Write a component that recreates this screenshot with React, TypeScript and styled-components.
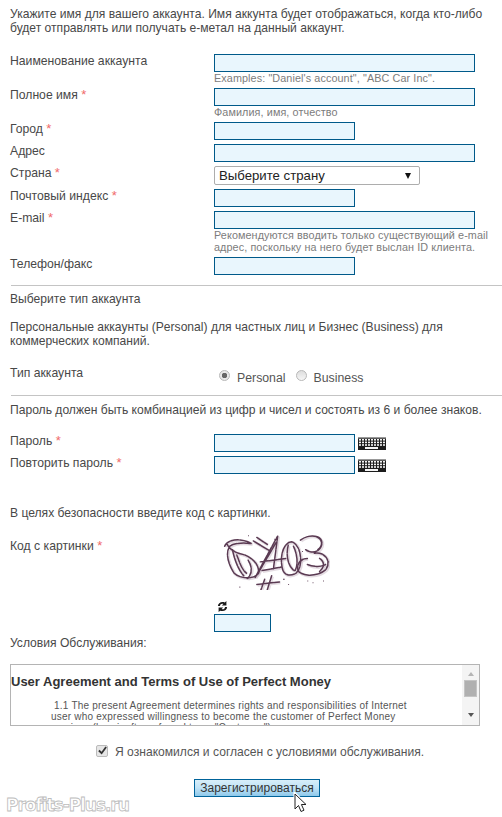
import React from "react";
import styled, { createGlobalStyle } from "styled-components";

const Global = createGlobalStyle`
  html, body { margin: 0; padding: 0; background: #fff; }
  body { font-family: "Liberation Sans", Arial, sans-serif; font-size: 12px; color: #444; }
`;

const Page = styled.div`
  position: relative;
  width: 502px;
  height: 817px;
  overflow: hidden;
  padding: 7px 0 0 10px;
  box-sizing: border-box;
`;

const Paragraph = styled.p<{ $top?: number; $bottom?: number }>`
  margin: ${(p) => p.$top ?? 0}px 0 ${(p) => p.$bottom ?? 0}px;
  line-height: 14px;
  font-size: 12.1px;
  color: #484848;
  white-space: nowrap;
`;

const Rows = styled.div<{ $top?: number }>`
  margin-top: ${(p) => p.$top ?? 0}px;
`;

const Row = styled.div<{ $height: number }>`
  display: grid;
  grid-template-columns: 204px 1fr;
  height: ${(p) => p.$height}px;
`;

const Label = styled.div`
  line-height: 14px;
  font-size: 12.2px;
  color: #484848;
  white-space: nowrap;
`;

const Star = styled.span`
  color: #f06a6a;
  font-size: 13px;
`;

const Field = styled.div`
  min-width: 0;
`;

const Inline = styled.div`
  display: flex;
  align-items: flex-start;
  gap: 3px;
`;

const TextInput = styled.input<{ $width: number }>`
  display: block;
  box-sizing: border-box;
  width: ${(p) => p.$width}px;
  height: 18px;
  margin: 0;
  padding: 0 2px;
  border: 1px solid #005a8a;
  outline: 0.4px solid #005a8a;
  outline-offset: -1px;
  background: #e9f6fd;
  border-radius: 0;
`;

const Hint = styled.div`
  font-size: 10.8px;
  line-height: 12px;
  color: #7c7c7c;
  white-space: nowrap;
  letter-spacing: 0.1px;
`;

const Select = styled.div`
  box-sizing: border-box;
  width: 206px;
  height: 19px;
  border: 1px solid #adadad;
  border-radius: 2px;
  padding: 0 4px;
  font-size: 13.2px;
  line-height: 18px;
  color: #222;
  display: flex;
  justify-content: space-between;
  align-items: center;
`;

const Arrow = styled.span`
  width: 0;
  height: 0;
  margin-right: 4px;
  border-left: 3px solid transparent;
  border-right: 3px solid transparent;
  border-top: 6px solid #111;
`;

const Divider = styled.hr<{ $top: number }>`
  border: 0;
  height: 1px;
  background: #c4c4c4;
  margin: ${(p) => p.$top}px 0 0 1px;
`;

const Radios = styled.div`
  display: flex;
  align-items: flex-start;
  margin-top: 3px;
  padding-left: 5px;
  font-size: 12.3px;
  color: #555;
  line-height: 14px;
`;

const Radio = styled.span<{ $on?: boolean }>`
  box-sizing: border-box;
  flex: none;
  width: 11px;
  height: 11px;
  margin: 1px 7px 0 0;
  border-radius: 50%;
  border: 1px solid #b8b8b8;
  background: ${(p) =>
    p.$on
      ? "radial-gradient(circle, #666 0 2.5px, #e8e8e8 3px)"
      : "linear-gradient(#ddd, #f6f6f6)"};
`;

const RadioText = styled.span`
  margin: 2px 10px 0 0;
`;

const CaptchaArea = styled.div`
  padding-left: 8px;
  margin-top: -7px;
`;

const Refresh = styled.svg`
  display: block;
  margin: 11px 0 2px 3px;
`;

const TermsBox = styled.div`
  box-sizing: border-box;
  margin-top: 14px;
  width: 470px;
  height: 62px;
  border: 1px solid #b4b4b4;
  display: flex;
  overflow: hidden;
`;

const TermsBody = styled.div`
  flex: 1;
  min-width: 0;
  overflow: hidden;
`;

const TermsTitle = styled.h2`
  margin: 9px 0 0;
  font-size: 13px;
  line-height: 16px;
  font-weight: bold;
  color: #333;
  white-space: nowrap;
`;

const TermsText = styled.p`
  margin: 10px 0 0 40px;
  font-size: 10px;
  line-height: 11px;
  color: #555;
  letter-spacing: 0.22px;
  white-space: nowrap;
`;

const Scrollbar = styled.div`
  width: 17px;
  background: #f4f4f4;
  display: flex;
  flex-direction: column;
  align-items: center;
  padding-top: 7px;
  box-sizing: border-box;
`;

const UpArrow = styled.span`
  width: 0;
  height: 0;
  border-left: 3.5px solid transparent;
  border-right: 3.5px solid transparent;
  border-bottom: 4px solid #b5b5b5;
`;

const Thumb = styled.span`
  width: 13px;
  height: 17px;
  margin-top: 4px;
  background: #b0b0b0;
  border: 1px solid #c4c4c4;
  box-sizing: border-box;
`;

const DownArrow = styled.span`
  width: 0;
  height: 0;
  margin-top: 16px;
  border-left: 3.5px solid transparent;
  border-right: 3.5px solid transparent;
  border-top: 4px solid #555;
`;

const Agree = styled.div`
  display: flex;
  align-items: center;
  margin: 19px 0 0 86px;
  font-size: 12.1px;
  line-height: 14px;
  color: #555;
  white-space: nowrap;
`;

const Check = styled.span`
  box-sizing: border-box;
  width: 12px;
  height: 12px;
  margin: -3px 7px 0 0;
  border: 1px solid #bbb;
  border-radius: 2px;
  background: #e6e6e6;
  display: flex;
  align-items: center;
  justify-content: center;
`;

const Submit = styled.div`
  box-sizing: border-box;
  width: 126px;
  height: 18px;
  margin: 20px 0 0 184px;
  border: 1px solid #00639a;
  background: linear-gradient(#d8eefa, #bfe2f6 50%, #8fc9ea);
  font-size: 12px;
  line-height: 16px;
  color: #333;
  text-align: center;
  white-space: nowrap;
`;

const Watermark = styled.div`
  position: absolute;
  left: 6px;
  top: 795px;
  font-size: 17px;
  line-height: 20px;
  font-family: "DejaVu Sans", sans-serif;
  font-weight: bold;
  color: #fff;
  letter-spacing: -1.05px;
  -webkit-text-stroke: 0.8px #bcbcbc;
`;

const Cursor = styled.svg`
  position: absolute;
  left: 293px;
  top: 792px;
`;

function Keyboard() {
  const keys: React.ReactNode[] = [];
  for (let r = 0; r < 3; r++) {
    for (let c = 0; c < 9; c++) {
      keys.push(<rect key={`${r}-${c}`} x={1 + c * 3} y={2 + r * 2.6} width={2} height={1.6} fill="#f4f4f4" />);
    }
  }
  return (
    <svg width="28" height="13" viewBox="0 0 28 13" style={{ marginTop: 3 }}>
      <rect width="28" height="13" fill="#1c1c1c" />
      <rect width="28" height="1.5" fill="#999" />
      {keys}
      <rect x="7" y="10" width="13" height="2" fill="#f4f4f4" />
    </svg>
  );
}

function Captcha() {
  const strokes = [
    "M3 16 C6 8 22 6 34 13 C26 12 14 12 9 16 C3 24 8 38 14 47 C20 53 36 55 42 47 C43 38 36 30 26 26 C18 24 10 22 6 14",
    "M12 20 C14 30 18 42 25 50 M17 26 C20 34 22 42 28 47 M30 32 C35 40 35 48 29 53",
    "M38 52 L64 4 L59 42 M42 46 L62 12 M44 34 L74 30 M46 44 L68 40 M36 10 L56 22 M40 6 L52 14 M49 54 L44 68 M57 50 L52 66 M40 60 L66 57",
    "M70 44 C65 28 71 11 80 11 C91 13 94 40 85 47 C78 51 72 49 70 44 M76 15 C73 26 76 40 83 44 M82 16 C86 24 88 36 84 44",
    "M90 9 C104 -1 120 6 113 18 C108 25 100 23 96 20 M108 5 C116 8 116 16 110 20 M106 24 C119 22 126 34 119 43 C110 51 94 51 88 45 C84 38 90 30 98 30 M112 30 C118 34 118 40 112 45",
    "M98 37 C106 40 114 40 119 37",
  ];
  return (
    <svg width="108" height="58" viewBox="0 0 124 66" fill="none" style={{ display: "block" }}>
      {strokes.map((d, i) => (
        <path key={`h${i}`} d={d} stroke="#cdbfca" strokeWidth="3.4" opacity="0.55" transform="translate(1 1)" />
      ))}
      {strokes.map((d, i) => (
        <path key={i} d={d} stroke="#5a3a52" strokeWidth="1.7" strokeLinecap="round" strokeDasharray="9 1.2" />
      ))}
      <path d="M20 63h1M76 60h1M104 58h1M122 34h1M60 8h1M92 22h1M30 4h1M70 54h2M98 56h1M116 56h1" stroke="#5a3a52" strokeWidth="1.2" />
    </svg>
  );
}

export default function App() {
  return (
    <Page>
      <Global />
      <Paragraph>
        Укажите имя для вашего аккаунта. Имя аккунта будет отображаться, когда кто-либо
        <br />
        будет отправлять или получать е-метал на данный аккаунт.
      </Paragraph>

      <Rows $top={19}>
        <Row $height={34}>
          <Label>Наименование аккаунта</Label>
          <Field>
            <TextInput $width={261} />
            <Hint>Examples: "Daniel's account", "ABC Car Inc".</Hint>
          </Field>
        </Row>
        <Row $height={34}>
          <Label>
            Полное имя <Star>*</Star>
          </Label>
          <Field>
            <TextInput $width={261} />
            <Hint>Фамилия, имя, отчество</Hint>
          </Field>
        </Row>
        <Row $height={22}>
          <Label>
            Город <Star>*</Star>
          </Label>
          <Field>
            <TextInput $width={141} />
          </Field>
        </Row>
        <Row $height={22}>
          <Label>Адрес</Label>
          <Field>
            <TextInput $width={261} />
          </Field>
        </Row>
        <Row $height={23}>
          <Label>
            Страна <Star>*</Star>
          </Label>
          <Field>
            <Select>
              Выберите страну
              <Arrow />
            </Select>
          </Field>
        </Row>
        <Row $height={22}>
          <Label>
            Почтовый индекс <Star>*</Star>
          </Label>
          <Field>
            <TextInput $width={141} />
          </Field>
        </Row>
        <Row $height={46}>
          <Label>
            E-mail <Star>*</Star>
          </Label>
          <Field>
            <TextInput $width={261} />
            <Hint>
              Рекомендуются вводить только существующий e-mail
              <br />
              адрес, поскольку на него будет выслан ID клиента.
            </Hint>
          </Field>
        </Row>
        <Row $height={18}>
          <Label>Телефон/факс</Label>
          <Field>
            <TextInput $width={141} />
          </Field>
        </Row>
      </Rows>

      <Divider $top={10} />
      <Paragraph $top={6}>Выберите тип аккаунта</Paragraph>
      <Paragraph $top={14}>
        Персональные аккаунты (Personal) для частных лиц и Бизнес (Business) для
        <br />
        коммерческих компаний.
      </Paragraph>

      <Rows $top={18}>
        <Row $height={29}>
          <Label>Тип аккаунта</Label>
          <Radios>
            <Radio $on />
            <RadioText>Personal</RadioText>
            <Radio />
            <RadioText>Business</RadioText>
          </Radios>
        </Row>
      </Rows>

      <Divider $top={0} />
      <Paragraph $top={7}>Пароль должен быть комбинацией из цифр и чисел и состоять из 6 и более знаков.</Paragraph>

      <Rows $top={17}>
        <Row $height={22}>
          <Label>
            Пароль <Star>*</Star>
          </Label>
          <Inline>
            <TextInput $width={141} />
            <Keyboard />
          </Inline>
        </Row>
        <Row $height={22}>
          <Label>
            Повторить пароль <Star>*</Star>
          </Label>
          <Inline>
            <TextInput $width={141} />
            <Keyboard />
          </Inline>
        </Row>
      </Rows>

      <Paragraph $top={28}>В целях безопасности введите код с картинки.</Paragraph>

      <Rows $top={19}>
        <Row $height={93}>
          <Label>
            Код с картинки <Star>*</Star>
          </Label>
          <Field>
            <CaptchaArea>
              <Captcha />
            </CaptchaArea>
            <Refresh width="11" height="11" viewBox="0 0 24 24">
              <path
                d="M2 11C2 4 10 0 17 3l3.500-3v10h-10l3.500-3.500C10 5 7 7 6.500 11zM22 13c0 7-8 11-15 8l-3.500 3V14h10l-3.500 3.500c4 1.500 7-.5 7.500-4.500z"
                fill="#1a1a1a"
              />
            </Refresh>
            <TextInput $width={57} />
          </Field>
        </Row>
      </Rows>

      <Paragraph $top={4}>Условия Обслуживания:</Paragraph>

      <TermsBox>
        <TermsBody>
          <TermsTitle>User Agreement and Terms of Use of Perfect Money</TermsTitle>
          <TermsText>
            &nbsp;1.1 The present Agreement determines rights and responsibilities of Internet
            <br />
            user who expressed willingness to become the customer of Perfect Money
            <br />
            services (hereinafter referred to as "Customer").
          </TermsText>
        </TermsBody>
        <Scrollbar>
          <UpArrow />
          <Thumb />
          <DownArrow />
        </Scrollbar>
      </TermsBox>

      <Agree>
        <Check>
          <svg width="9" height="9" viewBox="0 0 10 10">
            <path d="M1 5l3 3 5-7" stroke="#333" strokeWidth="2" fill="none" />
          </svg>
        </Check>
        Я ознакомился и согласен с условиями обслуживания.
      </Agree>

      <Submit>Зарегистрироваться</Submit>

      <Watermark>Profits-Plus.ru</Watermark>
      <Cursor width="15" height="22" viewBox="0 0 15 22">
        <path d="M2 2v15l3.500-3.500L8 19.500l3-1.300-2.600-5.700H13z" fill="#fff" stroke="#fff" strokeWidth="3" />
        <path d="M2 2v15l3.500-3.500L8 19.500l3-1.300-2.600-5.700H13z" fill="#fff" stroke="#222" strokeWidth="1" />
      </Cursor>
    </Page>
  );
}
